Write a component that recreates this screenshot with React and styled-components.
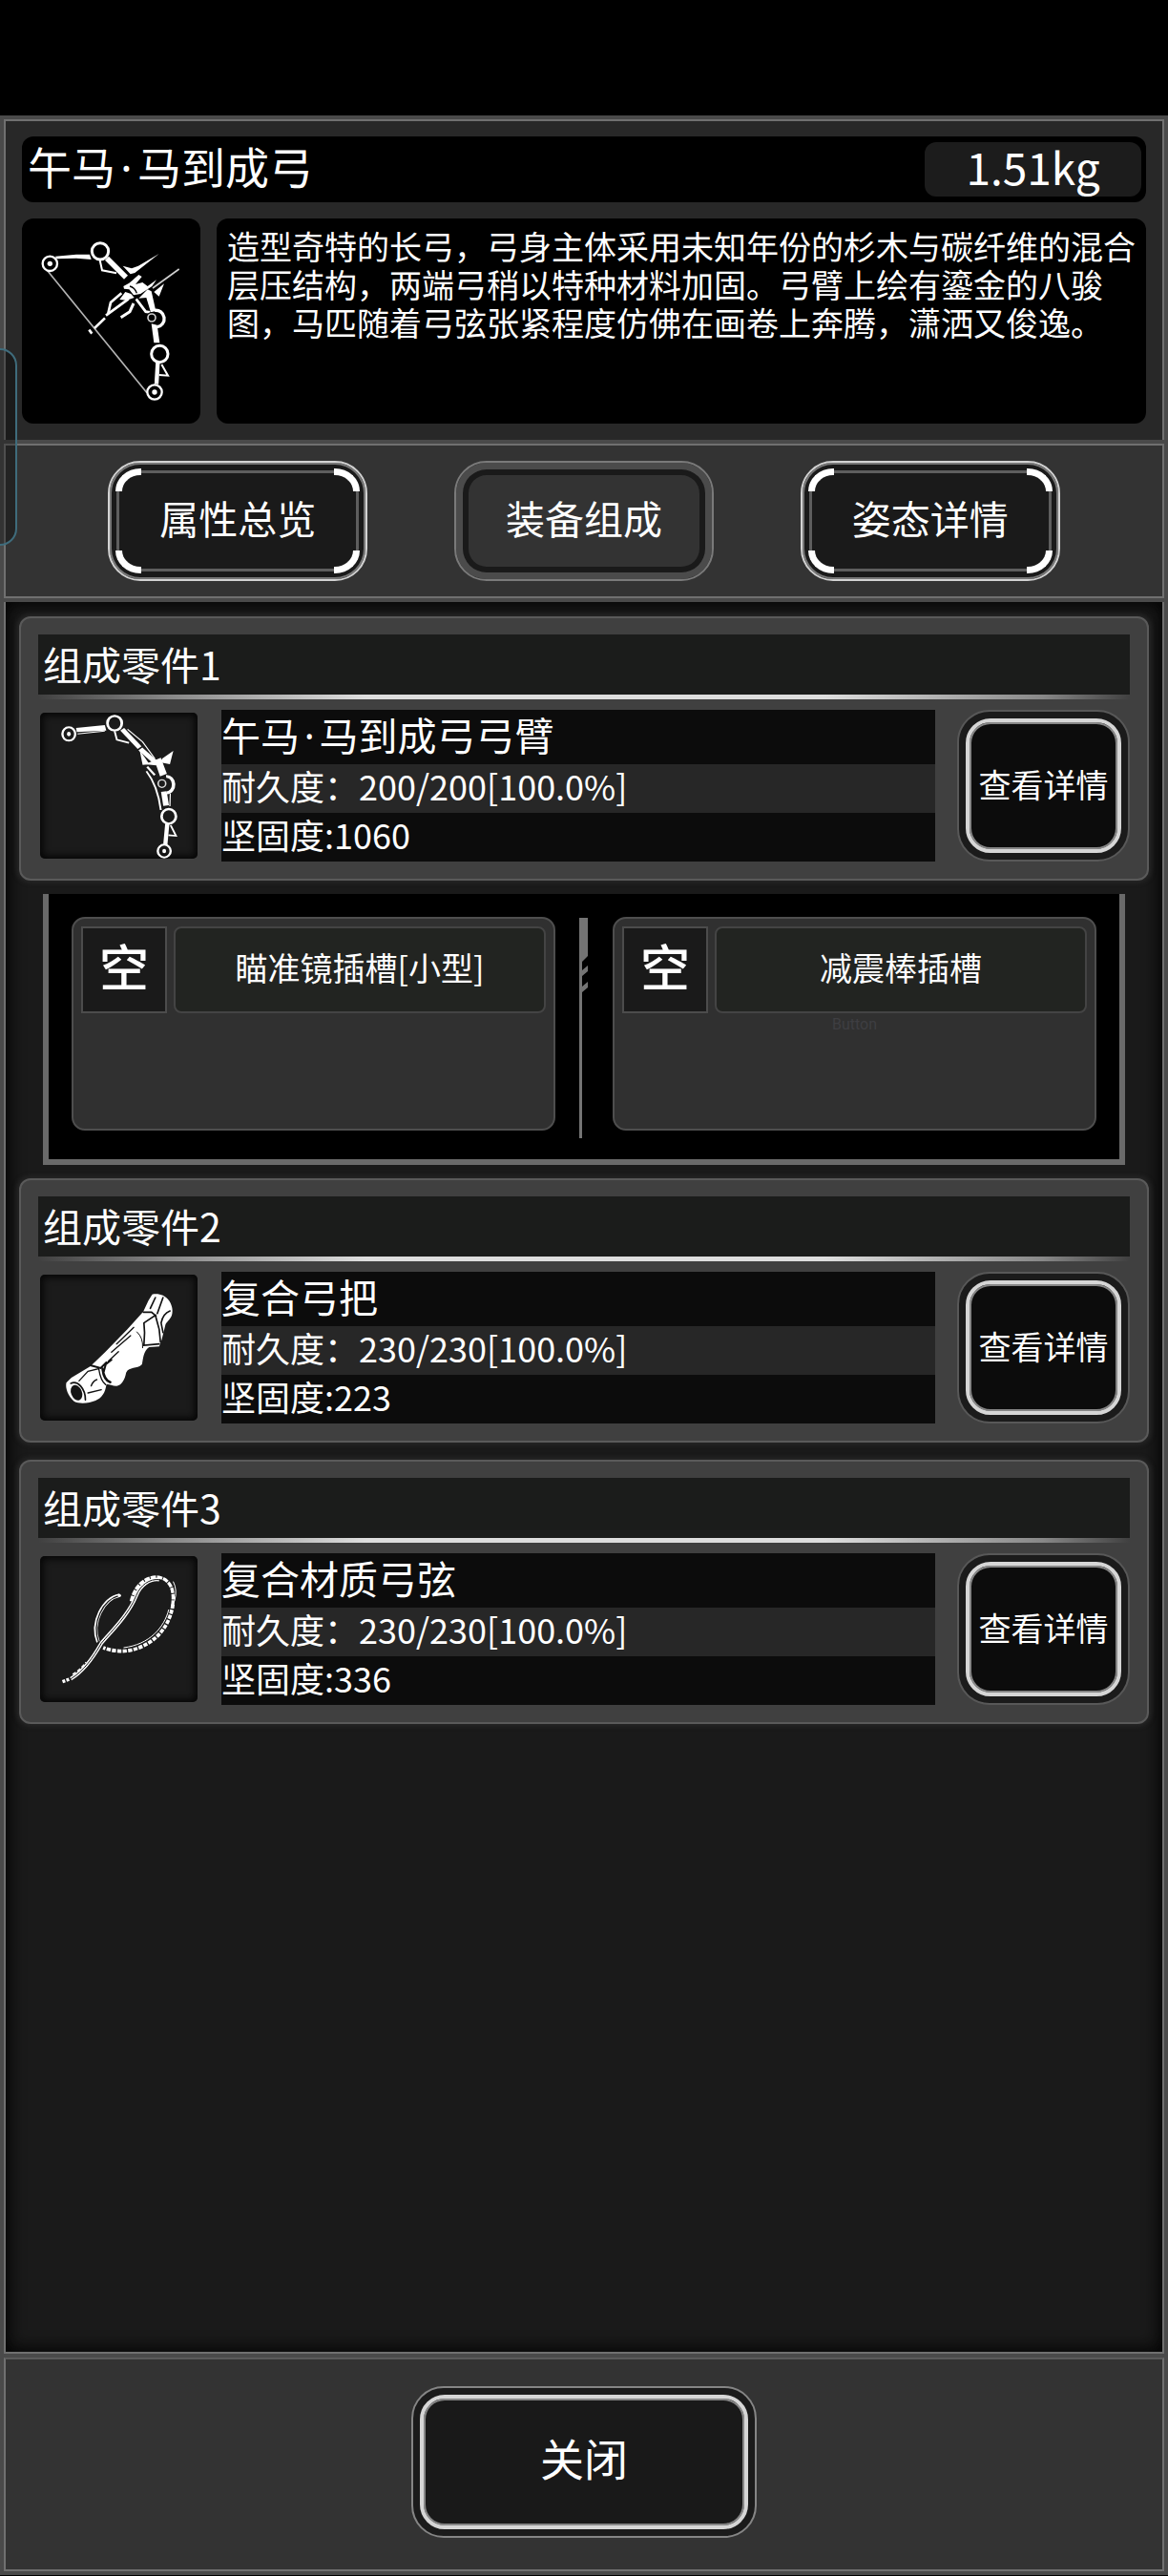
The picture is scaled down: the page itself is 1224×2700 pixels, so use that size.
import React, { useState } from 'react'
import styled, { createGlobalStyle, css } from 'styled-components'

const GlobalStyle = createGlobalStyle`
* {
box-sizing: border-box;
}
body {
margin: 0;
background-color: #000000;
color: #ffffff;
font-family: "Noto Sans CJK SC", sans-serif;
}
h1, h2, h3, p {
margin: 0;
font-weight: 400;
}
button {
font-family: inherit;
color: inherit;
padding: 0;
cursor: pointer;
}
`
const Page = styled.div`
min-height: 100vh;
padding: 121px 0 1px;
display: flex;
flex-direction: column;
`
const Frame = styled.main`
flex: 1;
display: flex;
flex-direction: column;
background-color: #4a4a4a;
padding: 4px;
gap: 4px;
`
const Section = styled.section`
border: 2px solid #707070;
background-color: #333333;
`
const Header = styled(Section)`
background-color: #282828;
border-bottom: none;
padding: 16px 17px 17px;
display: flex;
flex-direction: column;
gap: 17px;
`
const TitleBar = styled.div`
height: 69px;
border-radius: 12px;
background-color: #000000;
padding: 6px 5px 6px 6px;
display: flex;
justify-content: space-between;
`
const Title = styled.h1`
font-size: 46px;
line-height: 48px;
`
const Dot = styled.span`
display: inline-block;
width: 0.5em;
font-family: "Noto Sans", sans-serif;
line-height: 1;
text-align: center;
`
const Weight = styled.span`
width: 227px;
border-radius: 12px;
background-color: #1c1c1c;
font-size: 46px;
line-height: 50px;
text-align: center;
`
const Summary = styled.div`
display: flex;
gap: 17px;
`
const Portrait = styled.div`
width: 187px;
height: 215px;
border-radius: 12px;
background-color: #000000;
flex: none;
svg {
display: block;
}
`
const Story = styled.p`
flex: 1;
border-radius: 12px;
background-color: #000000;
padding: 9px 11px;
font-size: 34px;
line-height: 40px;
`
const Tabs = styled(Section)`
padding: 16px 62px;
display: grid;
grid-template-columns: repeat(3, 1fr);
justify-items: center;
`
const Tab = styled.button`
position: relative;
width: 272px;
height: 126px;
border-radius: 34px;
border: 2px solid #d2d2d2;
background-color: #1a1a1a;
box-shadow: inset 0 0 0 2px #777777;
font-size: 41px;
line-height: 48px;
padding-bottom: 8px;
${(props) => props.$on && css`
border-color: #7a7a7a;
background-color: #333333;
box-shadow: inset 0 0 0 7px #4b4b4b, inset 0 0 0 13px #1a1a1a;
`}
`
const TabLine = styled.span`
position: absolute;
inset: 8px 7px;
border: 3px solid #5e5e5e;
border-radius: 24px;
`
const Corner = styled.span`
position: absolute;
width: 27px;
height: 24px;
border: 0 solid #ffffff;
${(props) => props.$at.includes('t') ? 'top: 6px; border-top-width: 7px;' : 'bottom: 6px; border-bottom-width: 7px;'}
${(props) => props.$at.includes('l') ? 'left: 6px; border-left-width: 7px;' : 'right: 6px; border-right-width: 7px;'}
${(props) => props.$at === 'tl' && 'border-top-left-radius: 26px 24px;'}
${(props) => props.$at === 'tr' && 'border-top-right-radius: 26px 24px;'}
${(props) => props.$at === 'bl' && 'border-bottom-left-radius: 26px 24px;'}
${(props) => props.$at === 'br' && 'border-bottom-right-radius: 26px 24px;'}
`
const PartList = styled(Section)`
flex: 1;
border-top: none;
background-color: #1a1a1a;
box-shadow: inset 0 0 16px 4px #050505;
padding: 15px 14px;
display: flex;
flex-direction: column;
gap: 18px;
`
const PartGroup = styled.div`
display: flex;
flex-direction: column;
gap: 14px;
${(props) => props.$joined && 'margin-bottom: -4px;'}
`
const Part = styled.article`
height: 277px;
border: 2px solid #5a5a5a;
border-radius: 12px;
background-color: #404040;
box-shadow: 0 0 4px 3px #242424;
padding: 17px 18px;
`
const PartHead = styled.h2`
height: 63px;
background-color: #1b1c1b;
padding-left: 5px;
font-size: 41px;
line-height: 60px;
`
const Shine = styled.div`
height: 5px;
margin-bottom: 11px;
background: linear-gradient(to right, #40404000, #888888 12%, #dedede 30%, #dedede 72%, #888888 92%, #40404000);
`
const PartBody = styled.div`
display: flex;
align-items: center;
`
const Thumb = styled.div`
width: 165px;
height: 153px;
margin: 0 25px 0 2px;
border-radius: 5px;
background-color: #1b1b1b;
box-shadow: inset 0 0 7px 3px #060606;
flex: none;
svg {
display: block;
}
`
const Facts = styled.div`
flex: 1;
`
const FactName = styled.h3`
height: 57px;
background-color: #0c0c0c;
font-size: 41px;
line-height: 50px;
`
const Fact = styled.p`
height: 51px;
background-color: ${(props) => props.$lit ? '#272727' : '#0c0c0c'};
font-size: 36px;
line-height: 44px;
`
const RingButton = styled.button`
width: ${(props) => props.$wide ? '362px' : '181px'};
height: 159px;
border: 2px solid ${(props) => props.$wide ? '#858585' : '#585858'};
border-radius: 34px;
background-color: #1b1b1b;
padding: 7px;
flex: none;
margin-left: ${(props) => props.$wide ? '0' : '23px'};
`
const Ring = styled.span`
height: 100%;
border: 4px solid #d6d6d6;
border-radius: 26px;
background-color: ${(props) => props.$wide ? '#191919' : '#0c0c0c'};
box-shadow: inset 0 0 0 2px #868686;
padding-bottom: ${(props) => props.$wide ? '12px' : '4px'};
font-size: ${(props) => props.$wide ? '46px' : '34px'};
line-height: 54px;
white-space: nowrap;
display: flex;
align-items: center;
justify-content: center;
`
const Slots = styled.div`
margin: 0 25px;
height: 284px;
border: 6px solid #6a6a6a;
border-top: none;
background-color: #000000;
padding: 24px 24px 30px;
display: flex;
`
const Slot = styled.div`
flex: 1;
border: 2px solid #4e4e4e;
border-radius: 14px;
background-color: #303030;
padding: 8px;
`
const SlotTop = styled.div`
display: flex;
gap: 7px;
`
const SlotState = styled.span`
width: 90px;
height: 91px;
border: 2px solid #4c4c4c;
background-color: #1a1a1a;
font-size: 52px;
font-weight: 500;
line-height: 78px;
text-align: center;
`
const SlotName = styled.span`
flex: 1;
border: 2px solid #444444;
border-radius: 8px;
background-color: #222421;
font-size: 34px;
line-height: 82px;
text-align: center;
`
const SlotHint = styled.p`
font-family: Roboto, sans-serif;
font-size: 16px;
line-height: 24px;
text-align: center;
color: #3e3e42;
`
const Divider = styled.svg`
width: 60px;
height: 234px;
flex: none;
`
const Footer = styled(Section)`
padding: 28px 0 33px;
border-top-color: #5a5a5a;
display: flex;
justify-content: center;
`
const EdgeHandle = styled.div`
position: absolute;
left: -20px;
top: 365px;
width: 38px;
height: 207px;
border: 2px solid #3f6c7c;
border-radius: 18px;
background-color: #0000004d;
`

function BowIcon() {
  return (
    <svg width="187" height="215" viewBox="-21 27 561 645" fill="none" stroke="#fff">
      <path d="M58 190L372 575" stroke="#b4b4b4" strokeWidth="5" />
      <path d="M190 377L199 389" strokeWidth="8" />
      <circle cx="67" cy="169" r="23" strokeWidth="7" />
      <circle cx="67" cy="169" r="8" fill="#fff" stroke="none" />
      <path d="M84 146L150 140H192L197 156L150 152L88 154Z" fill="#fff" stroke="none" />
      <circle cx="225" cy="130" r="26" strokeWidth="9" />
      <path d="M224 158L231 190L276 199" strokeWidth="6" />
      <path d="M246 152L306 212" strokeWidth="17" />
      <path d="M410 138L345 176L324 184L296 176L320 202L334 198Z" fill="#fff" stroke="none" />
      <path d="M473 186L390 246" stroke="#d0d0d0" strokeWidth="5" />
      <path d="M298 240L316 230L346 204L356 210L336 234L358 228L374 240L402 220L388 240L352 264L330 268L316 250L300 248Z" fill="#fff" stroke="none" />
      <path d="M322 222L336 208M318 240Q334 244 340 262" stroke="#000" strokeWidth="4" />
      <path d="M292 262L258 291L250 326" strokeWidth="8" />
      <path d="M286 282L304 258L322 264L332 276L308 284Z" fill="#fff" stroke="none" />
      <path d="M314 280L243 332M240 340L207 372" strokeWidth="8" />
      <path d="M330 294L318 320L290 338" strokeWidth="9" />
      <path d="M338 280L368 320L382 322" strokeWidth="8" />
      <path d="M346 278L374 250L386 256L400 318L384 322L370 276Z" fill="#fff" stroke="none" />
      <path d="M394 258L426 232L410 272Z" fill="#fff" stroke="none" />
      <path d="M396 316A26 26 0 0 1 404 368" strokeWidth="10" />
      <circle cx="387" cy="339" r="15" stroke="#000" strokeWidth="6" />
      <circle cx="387" cy="339" r="12" stroke="#ccc" strokeWidth="5" />
      <path d="M386 358L404 362L412 418H394Z" fill="#fff" stroke="none" />
      <circle cx="412" cy="453" r="26" strokeWidth="9" />
      <path d="M406 480L402 548" strokeWidth="13" />
      <path d="M418 486L438 521L410 519" strokeWidth="6" />
      <circle cx="396" cy="573" r="23" strokeWidth="7" />
      <circle cx="396" cy="573" r="8" fill="#fff" stroke="none" />
    </svg>
  )
}

function LimbIcon() {
  return (
    <svg width="165" height="153" viewBox="107 350 416 459" preserveAspectRatio="none" fill="none" stroke="#fff">
      <ellipse cx="183" cy="417" rx="17" ry="21" strokeWidth="6" />
      <ellipse cx="183" cy="417" rx="5" ry="7" fill="#fff" stroke="none" />
      <path d="M202 398L278 389L282 406L204 411Z" fill="#fff" stroke="none" />
      <path d="M206 417L278 408" strokeWidth="3" />
      <ellipse cx="304" cy="383" rx="19" ry="23" strokeWidth="7" />
      <path d="M304 408L310 435L342 445" strokeWidth="5" />
      <path d="M324 402L370 460" strokeWidth="13" />
      <path d="M338 402L378 442L410 494" strokeWidth="3" />
      <path d="M372 464L412 506" strokeWidth="14" />
      <path d="M370 468L396 512L378 514Z" fill="#fff" stroke="none" />
      <path d="M459 470L430 494L424 506L450 512Z" fill="#fff" stroke="none" />
      <path d="M384 512L426 492L442 542L424 550L414 516Z" fill="#fff" stroke="none" />
      <path d="M390 520L410 546" strokeWidth="6" />
      <path d="M388 534Q418 580 426 656" strokeWidth="5" />
      <path d="M440 550A18 25 0 0 1 442 602" strokeWidth="9" />
      <ellipse cx="429" cy="573" rx="10" ry="12" stroke="#ddd" strokeWidth="4" />
      <path d="M434 598L440 642" strokeWidth="15" />
      <path d="M451 604L450 644" strokeWidth="3" />
      <ellipse cx="447" cy="676" rx="19" ry="23" strokeWidth="7" />
      <path d="M443 700L438 764" strokeWidth="11" />
      <path d="M452 704L466 737L446 735" strokeWidth="5" />
      <ellipse cx="435" cy="785" rx="17" ry="20" strokeWidth="6" />
      <ellipse cx="435" cy="785" rx="5" ry="7" fill="#fff" stroke="none" />
    </svg>
  )
}

function GripIcon() {
  return (
    <svg width="165" height="153" viewBox="126 318 494 459" fill="none" stroke="#111" strokeWidth="5" strokeLinecap="round">
      <path
        d="M478 380C500 376 518 384 528 396C540 410 544 430 540 444C536 458 526 464 520 474L508 522L500 544L468 546C450 560 450 580 446 600C430 616 406 606 396 626C392 650 380 666 366 668C350 668 340 660 334 664C330 690 320 706 300 714C280 722 250 726 232 716C214 700 204 676 208 658L224 642L284 606L330 562L400 490L450 434L466 400Z"
        fill="#fff"
        stroke="none"
      />
      <ellipse cx="240" cy="689" rx="17" ry="25" fill="#151515" stroke="none" transform="rotate(-22 240 689)" />
      <path d="M222 660C244 650 268 676 268 712" />
      <path d="M248 652L276 622L310 614C314 640 320 656 332 664M276 690L318 680M286 668Q292 652 304 648" strokeWidth="4" />
      <path d="M286 604L316 612L334 594M326 622L332 600L350 586" strokeWidth="6" />
      <path d="M322 614Q326 650 346 656" strokeWidth="8" />
      <path d="M350 562L382 534L410 510M366 536L420 484M340 590L372 560" strokeWidth="4" />
      <path d="M452 470L488 446L500 490L504 530M452 470L454 500L452 540L500 536" />
      <path d="M450 436L476 436L490 448M488 390L472 424M512 390L494 440M534 432Q512 440 506 470M506 470L512 500" strokeWidth="5" />
      <path d="M430 498Q450 516 448 548" strokeWidth="3" />
    </svg>
  )
}

function StringIcon() {
  return (
    <svg width="165" height="153" viewBox="126 332 494 459" fill="none" stroke="#fff">
      <path d="M222 718C262 694 292 652 318 606C352 566 404 516 428 456C440 424 470 402 500 406" strokeWidth="11" />
      <path d="M222 718C262 694 292 652 318 606C352 566 404 516 428 456C440 424 470 402 500 406" strokeWidth="3" stroke="#1b1b1b" />
      <path d="M196 727L220 718" strokeWidth="10" strokeDasharray="9 4" />
      <path d="M228 704Q252 690 270 666" strokeWidth="5" strokeDasharray="12 6" />
      <path d="M412 474C422 430 450 400 490 398C520 398 540 420 543 450C545 466 543 482 541 496" strokeWidth="10" strokeDasharray="17 3" />
      <path d="M544 412Q558 438 548 474" strokeWidth="3" />
      <path d="M543 484C534 550 490 610 410 628C380 634 350 630 324 620" strokeWidth="11" strokeDasharray="13 4" />
      <path d="M530 500C516 556 470 610 388 620" strokeWidth="3" />
      <path d="M376 455C324 466 284 540 308 602" strokeWidth="11" />
      <path d="M372 457C324 470 286 540 310 604" strokeWidth="4" stroke="#1b1b1b" />
      <circle cx="375" cy="456" r="5" fill="#fff" stroke="none" />
    </svg>
  )
}

const tabs = ['属性总览', '装备组成', '姿态详情']

const parts = [
  {
    name: '午马·马到成弓弓臂',
    wear: '200/200[100.0%]',
    firm: 1060,
    icon: LimbIcon,
    slots: [{ name: '瞄准镜插槽[小型]' }, { name: '减震棒插槽', hint: 'Button' }],
  },
  { name: '复合弓把', wear: '230/230[100.0%]', firm: 223, icon: GripIcon },
  { name: '复合材质弓弦', wear: '230/230[100.0%]', firm: 336, icon: StringIcon },
]

// the middle dot takes half a character
function ItemName({ text }) {
  const [first, rest] = text.split('·')
  if (!rest) return first
  return <>{first}<Dot>·</Dot>{rest}</>
}

function SlotCard({ slot }) {
  return (
    <Slot>
      <SlotTop>
        <SlotState>空</SlotState>
        <SlotName>{slot.name}</SlotName>
      </SlotTop>
      {slot.hint && <SlotHint>{slot.hint}</SlotHint>}
    </Slot>
  )
}

function PartSlots({ slots }) {
  return (
    <Slots>
      <SlotCard slot={slots[0]} />
      <Divider viewBox="0 0 60 234" fill="#747474">
        <path d="M25 1H34V41L28 47V232H25Z" />
        <path d="M28 56L34 51V57L28 62ZM28 73L34 68V74L28 79Z" />
      </Divider>
      <SlotCard slot={slots[1]} />
    </Slots>
  )
}

function PartCard({ part, index }) {
  const Icon = part.icon
  return (
    <PartGroup $joined={Boolean(part.slots)}>
      <Part>
        <PartHead>组成零件{index + 1}</PartHead>
        <Shine />
        <PartBody>
          <Thumb><Icon /></Thumb>
          <Facts>
            <FactName><ItemName text={part.name} /></FactName>
            <Fact $lit>耐久度：{part.wear}</Fact>
            <Fact>坚固度:{part.firm}</Fact>
          </Facts>
          <RingButton type="button"><Ring>查看详情</Ring></RingButton>
        </PartBody>
      </Part>
      {part.slots && <PartSlots slots={part.slots} />}
    </PartGroup>
  )
}

function App() {
  const [tab, setTab] = useState(1)

  return (
    <Page>
      <GlobalStyle />
      <Frame>
        <Header>
          <TitleBar>
            <Title><ItemName text="午马·马到成弓" /></Title>
            <Weight>1.51kg</Weight>
          </TitleBar>
          <Summary>
            <Portrait><BowIcon /></Portrait>
            <Story>
              造型奇特的长弓，弓身主体采用未知年份的杉木与碳纤维的混合层压结构，两端弓稍以特种材料加固。弓臂上绘有鎏金的八骏图，马匹随着弓弦张紧程度仿佛在画卷上奔腾，潇洒又俊逸。
            </Story>
          </Summary>
        </Header>
        <Tabs>
          {tabs.map((name, i) => (
            <Tab key={name} type="button" $on={tab === i} onClick={() => setTab(i)}>
              {tab !== i && (
                <>
                  <TabLine />
                  <Corner $at="tl" />
                  <Corner $at="tr" />
                  <Corner $at="bl" />
                  <Corner $at="br" />
                </>
              )}
              {name}
            </Tab>
          ))}
        </Tabs>
        <PartList>
          {parts.map((part, i) => (
            <PartCard key={part.name} part={part} index={i} />
          ))}
        </PartList>
        <Footer>
          <RingButton type="button" $wide><Ring $wide>关闭</Ring></RingButton>
        </Footer>
      </Frame>
      <EdgeHandle />
    </Page>
  )
}

export default App
